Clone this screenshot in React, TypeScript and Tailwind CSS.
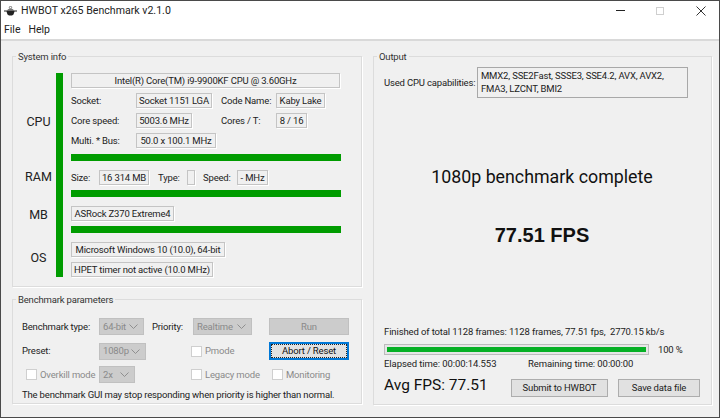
import type { ReactNode } from 'react';

const Box = ({ w, h = 'h-[15px]', children }: { w: string; h?: string; children?: ReactNode }) => (
  <div className={`${w} ${h} shrink-0 flex items-center justify-center border border-[#c4c4c4] shadow-[1px_1px_0_#fff] text-[#222] whitespace-nowrap`}>
    {children}
  </div>
);

const Label = ({ w, children }: { w: string; children: ReactNode }) => (
  <span className={`${w} shrink-0 whitespace-nowrap`}>{children}</span>
);

const Bar = () => <div className="h-[7px] w-[270px] bg-[#009c00]" />;

const Panel = ({ title, className, children }: { title: string; className: string; children: ReactNode }) => (
  <section className={`relative border border-[#dcdcdc] shadow-[1px_1px_0_#fff] ${className}`}>
    <span className="absolute -top-[7px] left-[3px] bg-[#f0f0f0] px-[2px] leading-[14px] text-[#333]">{title}</span>
    {children}
  </section>
);

const Select = ({ w, label }: { w: string; label: string }) => (
  <div className={`${w} h-[17px] shrink-0 flex items-center justify-between pl-[3px] pr-[5px] bg-[#cccccc] border border-[#c0c0c0] text-[#8a8a8a]`}>
    <span>{label}</span>
    <svg width="9" height="5" viewBox="0 0 9 5" fill="none" stroke="#8f8f8f"><path d="M.5.5l4 4 4-4" /></svg>
  </div>
);

const Check = ({ label }: { label: string }) => (
  <div className="flex items-center gap-[3px] text-[#8a8a8a] whitespace-nowrap">
    <div className="size-[11px] bg-white border border-[#cfcfcf]" />
    {label}
  </div>
);

export default function App() {
  return (
    <div className="w-[720px] h-[418px] overflow-hidden bg-[#4a4a4a] text-[9.500px] tracking-[-0.17px] leading-[14px] font-['Roboto',sans-serif] text-[#222]">
      <div className="h-[416px] mx-[1px] mt-[1px] bg-[#f0f0f0] flex flex-col">
        <header className="h-[19px] bg-white flex items-center pl-[3px] text-[#222]">
          <svg width="13" height="10" viewBox="0 0 13 10" className="mr-[4px]">
            <circle cx="6.500" cy="1.500" r="1.200" fill="none" stroke="#777" />
            <path d="M3 4.500C3.500 3 5 2.700 6.500 2.700S9.500 3 10 4.500z" fill="#777" />
            <path d="M0 4.500h13v1H10.500L9.500 8.500l-1.500 1H5l-1.500-1-1-3H0z" fill="#222" />
          </svg>
          <span className="text-[10.600px] tracking-normal">HWBOT x265 Benchmark v2.1.0</span>
          <div className="ml-auto flex items-center">
            <div className="w-[9px] h-[1px] bg-[#222] mr-[31px]" />
            <div className="size-[8px] border border-[#cfcfcf] mr-[32px]" />
            <svg width="10" height="10" viewBox="0 0 10 10" stroke="#333" className="mr-[13px]"><path d="M.5.5l9 9M9.500.5l-9 9" /></svg>
          </div>
        </header>
        <nav className="h-[19px] bg-white flex items-center gap-[8px] pl-[3px] text-[10.500px] tracking-normal border-b-[2px] border-[#d9d9d9] box-content">
          <span>File</span>
          <span>Help</span>
        </nav>
        <main className="flex gap-[11px] pl-[11px] pt-[15px]">
          <div className="flex flex-col gap-[12px] w-[350px]">
            <Panel title="System info" className="h-[231px] flex pt-[16px] pl-[7px]">
              <div className="w-[37px] flex flex-col items-center text-[12.500px] tracking-normal leading-[16px] text-[#222]">
                <span className="mt-[41px]">CPU</span>
                <span className="mt-[39px]">RAM</span>
                <span className="mt-[22px]">MB</span>
                <span className="mt-[27px]">OS</span>
              </div>
              <div className="w-[7px] h-[204px] bg-[#009c00] ml-[-1px] mr-[8px]" />
              <div className="flex flex-col">
                <Box w="w-[269px]">Intel(R) Core(TM) i9-9900KF CPU @ 3.60GHz</Box>
                <div className="mt-[5px] flex items-center h-[15px]">
                  <Label w="w-[65px]">Socket:</Label>
                  <Box w="w-[76px]">Socket 1151 LGA</Box>
                  <Label w="w-[55px] ml-[9px]">Code Name:</Label>
                  <Box w="w-[49px]">Kaby Lake</Box>
                </div>
                <div className="mt-[5px] flex items-center h-[15px]">
                  <Label w="w-[65px]">Core speed:</Label>
                  <Box w="w-[56px]">5003.6 MHz</Box>
                  <Label w="w-[55px] ml-[29px]">Cores / T:</Label>
                  <Box w="w-[31px]">8 / 16</Box>
                </div>
                <div className="mt-[5px] flex items-center h-[15px]">
                  <Label w="w-[65px]">Multi. * Bus:</Label>
                  <Box w="w-[80px]">50.0 x 100.1 MHz</Box>
                </div>
                <div className="mt-[6px]"><Bar /></div>
                <div className="mt-[9px] flex items-center h-[15px]">
                  <Label w="w-[28px]">Size:</Label>
                  <Box w="w-[50px]">16 314 MB</Box>
                  <Label w="w-[29px] ml-[9px]">Type:</Label>
                  <Box w="w-[8px]" />
                  <Label w="w-[34px] ml-[8px]">Speed:</Label>
                  <Box w="w-[31px]">- MHz</Box>
                </div>
                <div className="mt-[5px]"><Bar /></div>
                <div className="mt-[9px]"><Box w="w-[103px]">ASRock Z370 Extreme4</Box></div>
                <div className="mt-[5px]"><Bar /></div>
                <div className="mt-[9px]"><Box w="w-[154px]">Microsoft Windows 10 (10.0), 64-bit</Box></div>
                <div className="mt-[5px]"><Box w="w-[142px]">HPET timer not active (10.0 MHz)</Box></div>
              </div>
            </Panel>
            <Panel title="Benchmark parameters" className="h-[105px] pl-[9px] pt-[18px]">
              <div className="flex items-center h-[17px]">
                <Label w="w-[77px]">Benchmark type:</Label>
                <Select w="w-[45px]" label="64-bit" />
                <Label w="w-[41px] ml-[8px]">Priority:</Label>
                <Select w="w-[59px]" label="Realtime" />
                <div className="ml-[17px] w-[80px] h-[17px] flex items-center justify-center bg-[#cccccc] border border-[#c0c0c0] text-[#8a8a8a]">Run</div>
              </div>
              <div className="flex items-center h-[18px] mt-[7px]">
                <Label w="w-[77px]">Preset:</Label>
                <Select w="w-[47px]" label="1080p" />
                <div className="ml-[45px] w-[78px]"><Check label="Pmode" /></div>
                <button className="w-[80px] h-[18px] flex items-center justify-center bg-[#e1e1e1] border-2 border-[#0078d7] outline-1 -outline-offset-3 outline-dotted outline-[#222] text-[#111]">Abort / Reset</button>
              </div>
              <div className="flex items-center h-[17px] mt-[6px]">
                <div className="w-[77px] pl-[4px]"><Check label="Overkill mode" /></div>
                <Select w="w-[36px]" label="2x" />
                <div className="ml-[56px] w-[81px]"><Check label="Legacy mode" /></div>
                <Check label="Monitoring" />
              </div>
              <p className="mt-[5px] whitespace-nowrap">The benchmark GUI may stop responding when priority is higher than normal.</p>
            </Panel>
          </div>
          <Panel title="Output" className="w-[339px] h-[349px] flex flex-col pl-[10px] pr-[11px] pt-[10px]">
            <div className="flex items-center">
              <Label w="w-[93px]">Used CPU capabilities:</Label>
              <div className="w-[211px] h-[31px] border border-[#a8a8a8] pl-[3px] pt-[1px] pr-[8px] leading-[13px] text-[#222]">MMX2, SSE2Fast, SSSE3, SSE4.2, AVX, AVX2, FMA3, LZCNT, BMI2</div>
            </div>
            <div className="text-center text-[17.800px] tracking-normal leading-[22px] mt-[68px] text-[#111]">1080p benchmark complete</div>
            <div className="text-center text-[20px] tracking-normal leading-[24px] font-bold mt-[35px] text-[#111] font-['Liberation_Sans',sans-serif]">77.51 FPS</div>
            <div className="mt-[78px] whitespace-pre tracking-[-0.12px]">Finished of total 1128 frames: 1128 frames, 77.51 fps,  2770.15 kb/s</div>
            <div className="flex items-center h-[11px] mt-[5px]">
              <div className="w-[265px] h-[11px] border border-[#bcbcbc] p-[2px] bg-[#e6e6e6]">
                <div className="h-full w-full bg-[#06b025]" />
              </div>
              <span className="ml-[9px]">100 %</span>
            </div>
            <div className="flex mt-[2px] tracking-[-0.08px]">
              <span className="w-[144px]">Elapsed time: 00:00:14.553</span>
              <span>Remaining time: 00:00:00</span>
            </div>
            <div className="flex items-start mt-[6px]">
              <span className="w-[127px] text-[15.500px] tracking-normal leading-[16px] text-[#111] whitespace-nowrap">Avg FPS: 77.51</span>
              <button className="mt-[2px] w-[97px] h-[18px] bg-[#e1e1e1] border border-[#adadad] text-[#222]">Submit to HWBOT</button>
              <button className="mt-[2px] ml-[10px] w-[82px] h-[18px] bg-[#e1e1e1] border border-[#adadad] text-[#222]">Save data file</button>
            </div>
          </Panel>
        </main>
      </div>
    </div>
  );
}
